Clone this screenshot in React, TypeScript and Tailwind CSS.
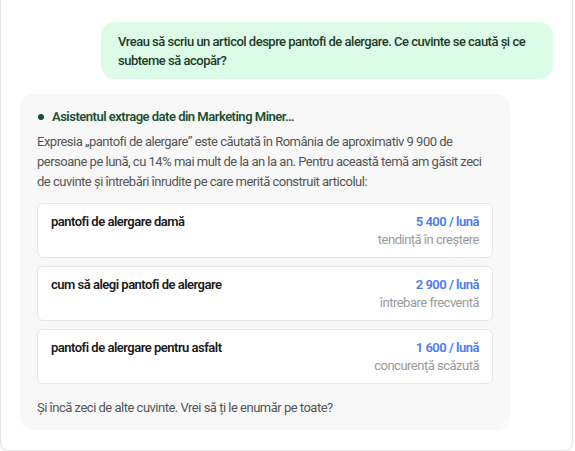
const keywords = [
  { term: "pantofi de alergare damă", volume: "5 400 / lună", note: "tendință în creștere" },
  { term: "cum să alegi pantofi de alergare", volume: "2 900 / lună", note: "întrebare frecventă" },
  { term: "pantofi de alergare pentru asfalt", volume: "1 600 / lună", note: "concurență scăzută" },
]

function KeywordCard({ term, volume, note }: { term: string; volume: string; note: string }) {
  return (
    <div className="flex justify-between rounded-md border border-[#e6e6e6] bg-white px-[13px] pt-[9px] pb-[8px] leading-[18px]">
      <p className="text-[13px] font-semibold text-[#1a1a1a]">{term}</p>
      <div className="text-right">
        <p className="text-[13px] font-semibold text-[#4b7bf0]">{volume}</p>
        <p className="text-[13px] text-[#9a9a9a]">{note}</p>
      </div>
    </div>
  )
}

export default function App() {
  return (
    <div className="h-[451px] w-[575px] bg-white font-['Roboto',sans-serif] tracking-[-0.5px]">
      <div className="h-[451px] w-[573px] rounded-b-lg border border-t-0 border-[#e3e3e3] px-[19px] pt-[22px]">
        <div className="flex justify-end">
          <div className="w-[452px] rounded-[14px] bg-[#dcfce7] px-[17px] pt-[10px] pb-[9px] text-[13px] leading-[19px] font-medium text-[#1f3a2a]">
            Vreau să scriu un articol despre pantofi de alergare. Ce cuvinte se caută și ce subteme să acopăr?
          </div>
        </div>

        <div className="mt-[15px] w-[490px] rounded-[14px] bg-[#f8f8f8] px-[17px] pt-[13px] pb-[12px]">
          <div className="flex items-center gap-[8px] pl-[1px]">
            <span className="h-[6px] w-[6px] rounded-full bg-[#1c4f30]" />
            <p className="text-[13px] font-semibold leading-[20px] text-[#1c4f30]">
              Asistentul extrage date din Marketing Miner…
            </p>
          </div>
          <p className="mt-[5px] text-[13px] leading-[20px] text-[#555]">
            Expresia „pantofi de alergare” este căutată în România de aproximativ 9 900 de persoane pe lună, cu 14% mai
            mult de la an la an. Pentru această temă am găsit zeci de cuvinte și întrebări înrudite pe care merită
            construit articolul:
          </p>
          <div className="mt-[11px] flex flex-col gap-[8px]">
            {keywords.map((k) => (
              <KeywordCard key={k.term} {...k} />
            ))}
          </div>
          <p className="mt-[14px] text-[13px] leading-[20px] text-[#555]">
            Și încă zeci de alte cuvinte. Vrei să ți le enumăr pe toate?
          </p>
        </div>
      </div>
    </div>
  )
}
